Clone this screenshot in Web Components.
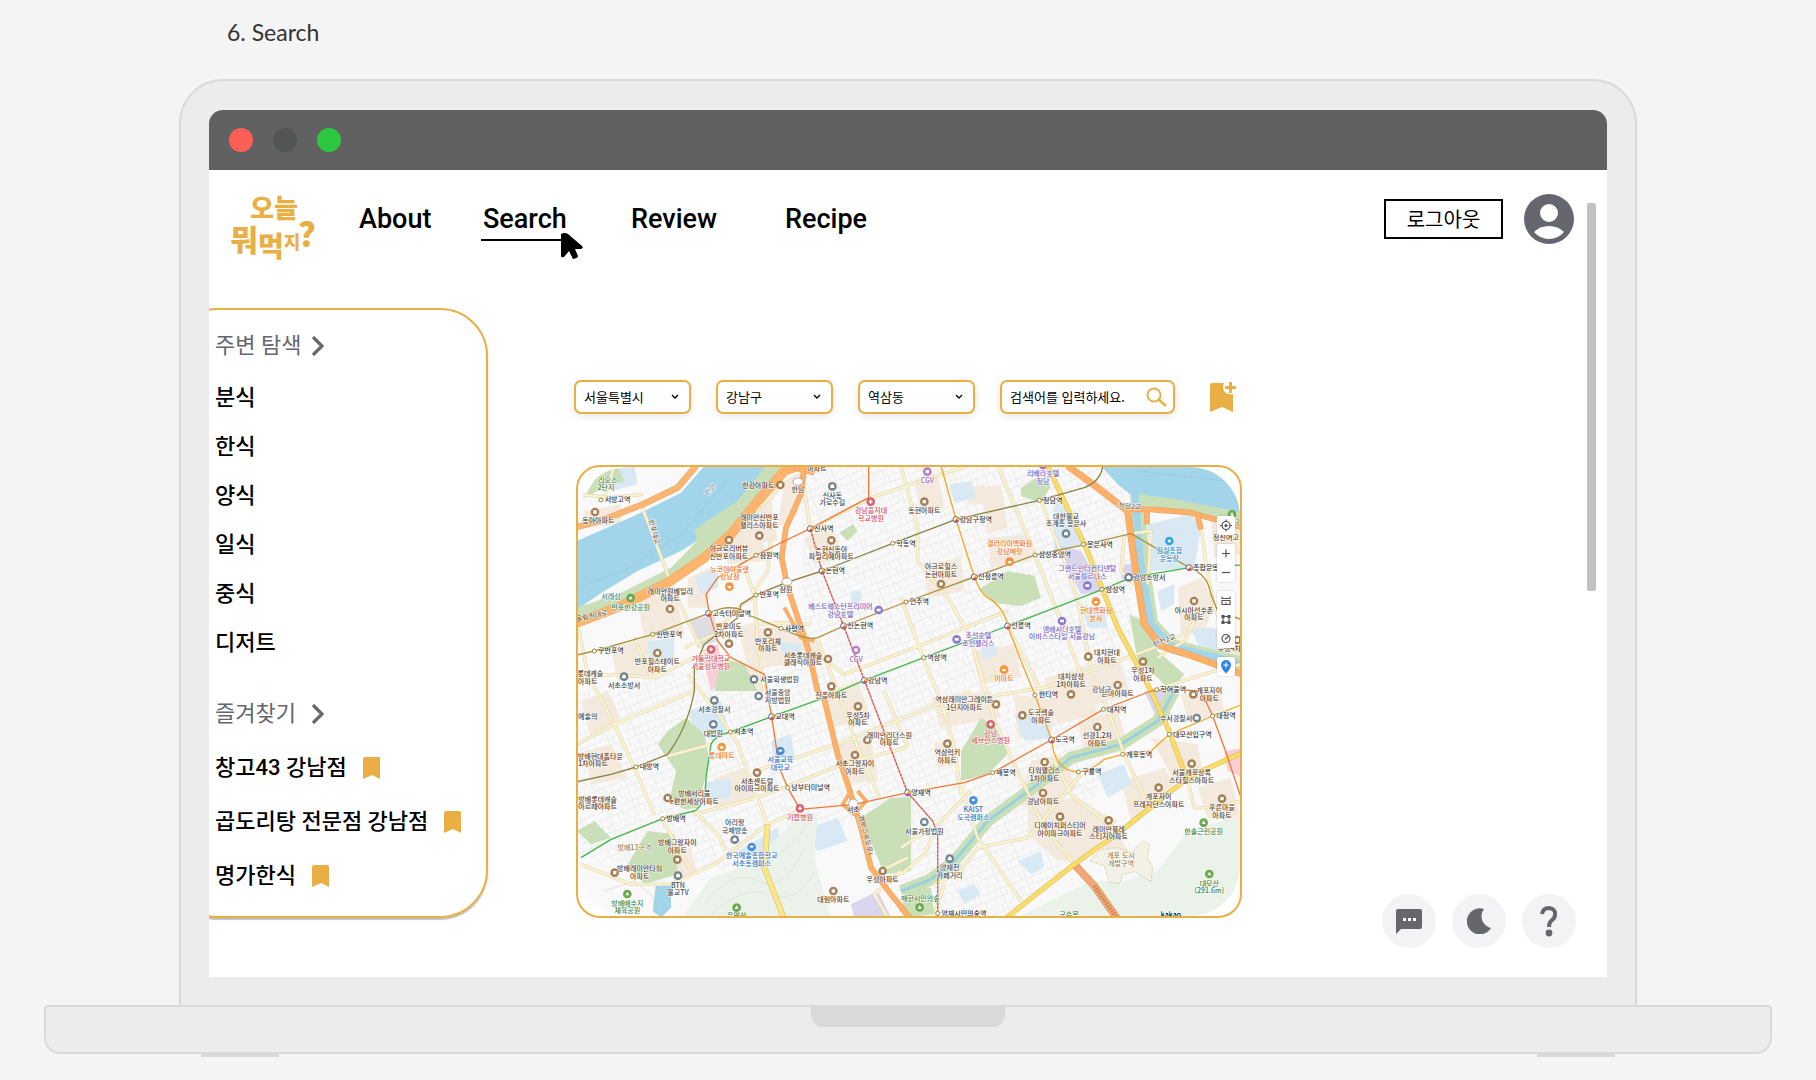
<!DOCTYPE html>
<html lang="ko">
<head>
<meta charset="UTF-8">
<meta name="viewport" content="width=device-width, initial-scale=1">
<title>6. Search</title>
<style>
  :root {
    --accent: #e9af44;
    --ink: #000;
    --muted: #66666e;
    --kr: Roboto, 'Noto Sans CJK KR', sans-serif;
  }
  body {
    margin: 0;
    background: #f4f4f4;
    color: var(--ink);
    font-family: var(--kr);
  }
</style>
</head>
<body>

<laptop-frame>
  <span slot="caption">6. Search</span>
  <site-header>
    <nav-link href="#about">About</nav-link>
    <nav-link href="#search" active>Search</nav-link>
    <nav-link href="#review">Review</nav-link>
    <nav-link href="#recipe">Recipe</nav-link>
  </site-header>
  <page-body>
    <side-panel slot="side">
      <menu-section label="주변 탐색" items="분식,한식,양식,일식,중식,디저트"></menu-section>
      <menu-section label="즐겨찾기" items="창고43 강남점,곱도리탕 전문점 강남점,명가한식" saved></menu-section>
    </side-panel>
    <filter-bar>
      <filter-select label="시/도" value="서울특별시"></filter-select>
      <filter-select label="구" value="강남구"></filter-select>
      <filter-select label="동" value="역삼동"></filter-select>
      <search-box placeholder="검색어를 입력하세요."></search-box>
    </filter-bar>
    <district-map></district-map>
  </page-body>
  <quick-actions></quick-actions>
</laptop-frame>

<script>
/* ---------- Laptop ---------- */
class LaptopFrame extends HTMLElement {
  constructor() {
    super();
    this.attachShadow({ mode: 'open' }).innerHTML = `
      <style>
        :host { display: block; }
        .caption {
          padding: 17px 227px 0;
          height: 62px;
          box-sizing: border-box;
          font: 23px/30px Lato, sans-serif;
          color: #333;
          margin-bottom: 17px;
        }
        .lid {
          margin: 0 179px;
          padding: 29px 28px 28px;
          border: 2px solid #dadada;
          border-bottom: none;
          border-radius: 44px 44px 0 0;
          background: #ececec;
        }
        .screen {
          position: relative;
          overflow: hidden;
          border-radius: 14px 14px 0 0;
          background: #fff;
        }
        .bar {
          display: flex;
          align-items: center;
          gap: 20px;
          height: 60px;
          padding: 0 20px;
          background: #616161;
        }
        .bar i { width: 24px; height: 24px; border-radius: 50%; }
        .close { background: #ff5f57; }
        .min { background: #545655; }
        .max { background: #2dc840; }
        .scroll {
          position: absolute;
          top: 93px;
          right: 11px;
          width: 9px;
          height: 388px;
          border-radius: 2px;
          background: #c2c2c2;
        }
        .base {
          display: flex;
          justify-content: center;
          height: 45px;
          margin: 0 44px;
          border: 2px solid #dadada;
          border-radius: 4px 4px 16px 16px;
          background: #ececec;
        }
        .notch {
          width: 194px;
          height: 20px;
          border-radius: 0 0 12px 12px;
          background: #d9d9d9;
        }
        .feet {
          display: flex;
          justify-content: space-between;
          margin: 0 201px;
        }
        .feet i { width: 78px; height: 3px; background: #d9d9d9; }
      </style>
      <div class="caption"><slot name="caption"></slot></div>
      <div class="lid">
        <div class="screen">
          <div class="bar"><i class="close"></i><i class="min"></i><i class="max"></i></div>
          <slot></slot>
          <div class="scroll"></div>
        </div>
      </div>
      <div class="base"><div class="notch"></div></div>
      <div class="feet"><i></i><i></i></div>
    `;
  }
}

/* ---------- Header ---------- */
class SiteHeader extends HTMLElement {
  constructor() {
    super();
    this.attachShadow({ mode: 'open' }).innerHTML = `
      <style>
        :host {
          display: flex;
          align-items: center;
          height: 98px;
          padding: 0 33px 0 22px;
        }
        .logo { display: block; width: 84px; height: 86px; }
        .logo svg { display: block; overflow: visible; }
        .logo text {
          fill: var(--accent);
          font-family: 'Noto Sans CJK KR', sans-serif;
          font-weight: 900;
          text-anchor: middle;
        }
        nav {
          flex: 1;
          display: grid;
          grid-template-columns: 124px 148px 154px auto;
          justify-items: start;
          margin-left: 42px;
        }
        .logout {
          width: 119px;
          height: 40px;
          padding: 0;
          border: 2px solid #000;
          background: #fff;
          color: #000;
          font: 20px/28px 'Noto Sans CJK KR', sans-serif;
        }
        .avatar {
          margin-left: 21px;
          padding: 0;
          border: none;
          background: none;
        }
        .avatar svg { display: block; width: 50px; height: 50px; }
      </style>
      <a class="logo" href="#home" aria-label="오늘 뭐먹지?">
        <svg width="84" height="86" viewBox="0 0 84 86">
          <text x="43" y="42" font-size="26">오늘</text>
          <text x="13" y="75" font-size="30">뭐</text>
          <text x="40" y="81" font-size="28">먹</text>
          <text x="61" y="73" font-size="18">지</text>
          <text x="76" y="71" font-size="34">?</text>
        </svg>
      </a>
      <nav><slot></slot></nav>
      <button class="logout">로그아웃</button>
      <button class="avatar" aria-label="내 정보">
        <svg viewBox="0 0 50 50">
          <circle cx="25" cy="25" r="25" fill="#66666e"/>
          <circle cx="25" cy="19" r="9" fill="#fff"/>
          <path d="M10 38Q16 32 25 32T40 38Q34 45 25 45T10 38z" fill="#fff"/>
        </svg>
      </button>
    `;
  }
}

class NavLink extends HTMLElement {
  connectedCallback() {
    const active = this.hasAttribute('active');
    this.attachShadow({ mode: 'open' }).innerHTML = `
      <style>
        :host { display: block; position: relative; }
        a {
          display: block;
          padding: 4px 2px;
          border: solid transparent;
          border-width: 2px 0;
          color: #000;
          font: 500 27px/32px Roboto, sans-serif;
          text-decoration: none;
        }
        a.active { border-bottom-color: #000; }
        .cursor { position: absolute; right: -14px; bottom: -18px; width: 22px; height: 26px; }
      </style>
      <a class="${active ? 'active' : ''}" href="${this.getAttribute('href')}"><slot></slot></a>
      ${active ? '<svg class="cursor" viewBox="0 0 22 26"><path d="M0 1Q4-1 7 1L21 13Q23 15 20 16L14 16L17 23Q17 25 12 26L8 18L3 24Q0 25 0 23z"/></svg>' : ''}
    `;
  }
}

/* ---------- Page columns ---------- */
class PageBody extends HTMLElement {
  constructor() {
    super();
    this.attachShadow({ mode: 'open' }).innerHTML = `
      <style>
        :host { display: flex; align-items: flex-start; padding: 40px 0 59px; }
        main { flex: 0 1 668px; min-width: 0; margin-left: 86px; padding-top: 72px; }
      </style>
      <slot name="side"></slot>
      <main><slot></slot></main>
    `;
  }
}

class SidePanel extends HTMLElement {
  constructor() {
    super();
    this.attachShadow({ mode: 'open' }).innerHTML = `
      <style>
        :host {
          display: flex;
          flex-direction: column;
          gap: 31px;
          flex: none;
          box-sizing: border-box;
          width: 319px;
          margin-left: -40px;
          padding: 20px 0 13px 44px;
          border: 2px solid var(--accent);
          border-radius: 48px;
          box-shadow: 0 2px 1px rgba(0, 0, 0, 0.25);
        }
      </style>
      <slot></slot>
    `;
  }
}

class MenuSection extends HTMLElement {
  connectedCallback() {
    const saved = this.hasAttribute('saved');
    const mark  = '<svg width="17" height="22" viewBox="0 0 17 22"><path d="M0 2Q0 0 2 0H15Q17 0 17 2V22L9 18L0 22z" fill="#e9af44"/></svg>';
    const items = this.getAttribute('items').split(',');

    this.attachShadow({ mode: 'open' }).innerHTML = `
      <style>
        :host { display: block; font-size: 22px; line-height: 32px; }
        h2 {
          display: flex;
          align-items: center;
          margin: 0 0 11px;
          color: var(--muted);
          font: inherit;
        }
        h2 span { min-width: 96px; }
        ul { margin: 0; padding: 0; list-style: none; }
        li { display: flex; align-items: center; height: ${saved ? 54 : 49}px; }
        a {
          display: flex;
          align-items: center;
          gap: 16px;
          color: #000;
          font-weight: 500;
          text-decoration: none;
        }
      </style>
      <h2>
        <span>${this.getAttribute('label')}</span>
        <svg width="14" height="20" viewBox="0 0 14 20"><path d="M2 1L11 10L2 19" fill="none" stroke="#66666e" stroke-width="3.200"/></svg>
      </h2>
      <ul>${items.map(t => `<li><a href="#">${t}${saved ? mark : ''}</a></li>`).join('')}</ul>
    `;
  }
}

/* ---------- Filters ---------- */
class FilterBar extends HTMLElement {
  constructor() {
    super();
    this.attachShadow({ mode: 'open' }).innerHTML = `
      <style>
        :host { display: flex; align-items: center; gap: 25px; margin-bottom: 51px; }
        button { padding: 0 0 0 10px; border: none; background: none; }
        svg { display: block; }
      </style>
      <slot></slot>
      <button aria-label="즐겨찾기 추가">
        <svg width="26" height="30" viewBox="0 0 26 30" fill="#e9af44">
          <path d="M2 1H14Q12 5 14 9Q17 13 23 12V30L12 25L0 30V3Q0 1 2 1z"/>
          <path d="M19 0H22V4H26V7H22V11H19V7H15V4H19z"/>
        </svg>
      </button>
    `;
  }
}

const FIELD_CSS = `
  :host { display: block; min-width: 0; }
  .field {
    display: flex;
    align-items: center;
    box-sizing: border-box;
    height: 34px;
    padding: 0 8px;
    border: 2px solid var(--accent);
    border-radius: 7px;
    background: #fff;
    box-shadow: 0 2px 8px rgba(0, 0, 0, 0.1);
  }
  select, input {
    flex: 1;
    min-width: 0;
    padding: 0;
    border: none;
    outline: none;
    appearance: none;
    background: none;
    color: #000;
    font: 13px/20px 'Noto Sans CJK KR', sans-serif;
  }
  svg { flex: none; }
`;

class FilterSelect extends HTMLElement {
  connectedCallback() {
    this.attachShadow({ mode: 'open' }).innerHTML = `
      <style>${FIELD_CSS} :host { flex: 0 1 117px; }</style>
      <div class="field">
        <select aria-label="${this.getAttribute('label')}"><option>${this.getAttribute('value')}</option></select>
        <svg width="12" height="8" viewBox="0 0 12 8"><path d="M3 2L6 5L9 2" fill="none" stroke="#000" stroke-width="1.4"/></svg>
      </div>
    `;
  }
}

class SearchBox extends HTMLElement {
  connectedCallback() {
    this.attachShadow({ mode: 'open' }).innerHTML = `
      <style>
        ${FIELD_CSS}
        :host { flex: 0 1 175px; }
        .field { padding-right: 6px; }
        input::placeholder { color: #000; opacity: 1; }
      </style>
      <label class="field">
        <input type="text" aria-label="검색어" placeholder="${this.getAttribute('placeholder')}">
        <svg width="21" height="20" viewBox="0 0 21 20" fill="none" stroke="#e9af44" stroke-width="2">
          <circle cx="8" cy="8" r="6.5"/><path d="M12 12L20 19" stroke-width="2.6"/>
        </svg>
      </label>
    `;
  }
}

/* ---------- Map ---------- */
const WATER = [
  'M18 240L120 195L210 155L330 95L400 15H610L540 90L440 200L330 270L200 330L100 390L18 445z',
  'M1590 15H2015V160L1850 125L1690 110L1640 70z',
  'M255 1270L300 1270L300 1340L270 1370L245 1350z'
];

const GREEN = [
  'M585 15L500 120L370 205L378 240L300 320L150 395L18 440V478L200 410L330 345L450 265L540 160L650 25V15z',
  'M1690 98L1800 112L2010 155V185L1860 160L1700 130z',
  'M1225 385L1310 330L1390 345L1410 410L1350 435L1270 425z',
  'M1350 80L1400 48L1440 75L1410 125L1350 105z',
  'M805 215L845 190L860 210L830 240z',
  'M290 810L345 770L400 820L415 900L380 1040L340 1045L295 1020L315 930L260 850z',
  'M230 1110L310 1120L320 1240L220 1270L170 1210z',
  'M450 590L520 610L560 690H430z',
  'M1170 870L1230 770L1290 810L1310 880L1250 940L1170 960z',
  'M1675 460L1720 480L1760 570L1840 640L1800 690L1760 650L1700 600z',
  'M870 1070L960 1010H1020V1230L940 1240z',
  'M990 1270L1080 1280L1090 1360L1000 1370z',
  'M85 30L140 15L160 60L80 90L40 110z',
  'M1820 570L2010 620V600L1850 550z',
  'M18 1110L70 1080L120 1130L60 1150z'
];

const HILLS = [
  'M330 1375L420 1250L540 1210L690 1060L740 1055L730 1190L780 1375z',
  'M1330 1375L1480 1300L1560 1260L1660 1260L1760 1230L1850 1110L2015 1060V1375z'
];

const BLOCKS = [
  'M40 150L150 130L150 190L40 200z', 'M500 150L600 110L620 240L520 250z', 'M350 350L420 320L410 440L350 440z',
  'M200 420L310 380L340 520L220 540z', 'M120 560L230 530L260 640L140 660z', 'M460 220L560 180L590 300L470 310z',
  'M560 500L680 500L720 600L580 620z', 'M500 500L560 480L570 600L540 650z', 'M640 60L690 30L680 160L620 200z',
  'M700 230L780 190L820 290L730 310z', 'M30 720L110 690L150 770L60 830z', 'M40 870L120 850L170 950L60 970z',
  'M430 950L520 920L560 1010L430 1040z', 'M740 700L860 660L900 770L790 800z', 'M800 850L900 830L920 960L830 970z',
  'M300 1170L360 1160L380 1240L310 1260z', 'M1030 60L1100 40L1120 140L1050 160z', 'M1060 310L1170 290L1180 390L1070 410z',
  'M1190 80L1240 70L1240 130L1190 130z', 'M1230 80L1290 70L1310 200L1250 220z', 'M1250 230L1370 220L1380 300L1260 320z',
  'M1820 380L1890 350L1930 420L1900 520L1830 520z', 'M1200 570L1330 550L1350 650L1230 670z', 'M1520 620L1640 590L1680 700L1540 740z',
  'M1420 650L1540 620L1580 760L1460 790z', 'M1080 710L1260 690L1290 770L1110 800z', 'M1330 700L1460 720L1440 830L1340 830z',
  'M1520 780L1640 750L1670 850L1540 880z', 'M1380 900L1470 880L1520 980L1420 1050L1340 1030z', 'M1370 1040L1510 1010L1640 1080L1550 1190L1460 1200L1370 1120z',
  'M1650 960L1780 920L1810 970L1680 1080z', 'M1740 830L1880 850L1900 960L1810 960z', 'M1880 980L1980 950L2010 1080L1910 1070z',
  'M1920 180L2010 190V280L1930 290z', 'M1090 850L1150 830L1160 910L1100 920z', 'M1600 1150L1640 1110L1670 1170L1620 1210z',
  'M1830 700L1950 690L1960 760L1850 780z', 'M500 610L560 600L580 690L520 690z', 'M700 550L750 540L770 600L720 610z'
];

const PALE = [
  'M1730 190L1860 160L1890 200L1870 320L1740 330z', 'M1450 120L1500 150L1530 250L1450 270z', 'M1135 70L1200 60L1215 110L1150 125z',
  'M350 750L450 720L470 800L430 840L380 820z', 'M400 965L480 950L480 1010L400 1020z', 'M600 840L660 820L670 890L610 900z',
  'M500 1170L620 1100L630 1140L590 1200L520 1190z', 'M690 1110L800 1070L830 1140L740 1170z', 'M370 350L440 320L440 380L390 400z',
  'M230 540L310 530L310 590L240 620z', 'M620 540L690 550L690 610L650 600z', 'M1330 760L1430 770L1440 830L1360 840z',
  'M1580 940L1660 910L1680 970L1610 1010z', 'M1340 1200L1410 1170L1420 1220L1380 1240z', 'M1530 430L1600 450L1610 500L1550 500z',
  'M1760 390L1810 370L1810 430L1770 450z', 'M1860 500L1930 500L2010 560V600L1880 550z', 'M1160 1290L1210 1270L1230 1300L1180 1330z',
  'M840 390L870 390L870 420L840 430z', 'M1230 560L1270 550L1280 580L1240 600z', 'M100 30L190 15L200 70L120 90z', 'M940 1020L1020 1000L1020 1060z'
];

const STREETS = [
  'M18 100L120 110L215 100', 'M130 15L100 110', 'M210 130L290 340L350 480L390 560', 'M18 480L50 640L130 790L190 920L250 1060',
  'M18 650L130 640L250 650L430 560', 'M190 530L240 650', 'M350 640L450 770L500 850L540 960L590 1090', 'M18 850L130 790L250 740L370 690',
  'M270 1070L360 1230', 'M370 1050L440 1120L465 1170', 'M30 1210L180 1270L300 1270L430 1210L590 1090L680 1050', 'M370 1060L560 1010L640 980L840 900L1010 860',
  'M420 850L290 885', 'M550 930L800 850L1000 770L1200 690', 'M540 160L600 110L640 60', 'M520 320L550 400L560 540L580 690', 'M600 230L590 330L550 390',
  'M340 560L430 520L500 440L560 400', 'M560 490L630 485L720 490', 'M690 15L718 203', 'M718 203L900 110L1050 60L1190 15', 'M990 15L1040 200L1040 300L1130 410L1200 530L1240 690',
  'M740 540L800 690L860 860L925 1010', 'M740 580L820 640L1005 570L1310 450', 'M990 410L1060 600L1110 720L1150 860L1170 1000', 'M1280 15L1380 250L1450 430L1530 640',
  'M1410 120L1480 300L1520 420L1560 620', 'M1100 760L1290 700L1420 680L1560 630L1750 560L1840 520', 'M1310 495L1410 690', 'M1220 600L1270 780L1340 930L1420 1100L1510 1210',
  'M1170 980L1220 1130L1350 1320', 'M1200 990L1100 1090L1060 1180L990 1240', 'M1090 1270L1160 1240L1220 1160L1370 1130L1420 1070L1530 940', 'M1450 900L1500 1000L1640 1110',
  'M1600 720L1660 880L1720 1010', 'M1760 590L1840 540L1880 460', 'M1680 218L1740 210L1730 370', 'M1660 220L1650 330L1690 370', 'M1890 200L1910 340L1930 440L1990 580',
  'M1740 690L1930 630L2010 610', 'M990 1160L1080 1100', 'M940 690L1010 860', 'M1120 1270L1090 1360', 'M890 1250L1010 1190', 'M950 1370L910 1300L990 1230', 'M1850 960L1870 1040L1930 1040L2010 1020'
];

// [path, casing, fill, width]
const HIGHWAYS = [
  ['M18 198L100 175L215 130L320 80L375 15', '#e9a45c', '#fcb673', 16],
  ['M18 485L150 435L290 365L400 290L480 220L560 120L640 30L680 15', '#f0a860', '#fdb56e', 26],
  ['M650 15L730 35M700 15L690 100L645 200L632 290L650 380L690 500L710 560L740 690L760 715L800 880L840 1000L870 1100L900 1220L960 1300L1020 1375', '#e9a45c', '#fcb06a', 14],
  ['M640 440L690 530L730 540', '#e9a45c', '#fcb06a', 8],
  ['M840 990L815 1030L850 1060L885 1020L860 990', '#e9a45c', '#fcb06a', 8],
  ['M1490 15L1580 80L1670 150L1690 300L1720 490L1770 555L1850 580L2015 640', '#e9a45c', '#fcb06a', 18],
  ['M1670 145L1740 145L1860 155L1930 175L2015 200M1728 145V190M1880 165L1890 205', '#e9a45c', '#fcb06a', 14],
  ['M1510 1210L1570 1275L1640 1375', '#d9925a', '#f0a878', 20],
  ['M1430 15L1545 260L1640 500L1740 690L1790 800L1850 960', '#dcb840', '#f9dc6c', 12],
  ['M1300 1375L1510 1210L1650 1110L1800 990L1870 940L2015 875', '#dcb840', '#f9dc6c', 12],
  ['M590 1090L580 1220L640 1375', '#d8bc58', '#fbe68a', 14],
  ['M990 1340L1020 1375', '#e9a45c', '#fcb06a', 14]
];

// [path, colour]
const LINES = [
  ['M893 15V110L718 203L640 240L555 283L440 350L405 400L415 457L440 540L480 590L580 640L595 730L602 767L625 920L650 980L687 1045L850 1030L1010 995L1180 965L1265 935L1440 837L1597 745L1740 690L1800 685L1890 690L1925 765L1960 860L2010 1010', '#ef7a35'],
  ['M718 203L753 330L818 495L880 658L950 840L1010 995L1085 1080L1100 1120V1370', '#d4504c'],
  ['M18 582L70 570L245 520L413 457Q490 420 540 465L630 502Q710 540 740 530L818 495L1005 423L1210 348L1392 282L1545 250L1680 218L1855 320Q1910 340 1920 400L1940 450L2010 475', '#b0923c'],
  ['M18 962L120 940L195 918L290 880Q350 800 370 690V620L400 550L500 470L510 430L555 402L645 365L753 330L965 247L1155 175L1405 118L1540 80Q1590 60 1595 15', '#8c8340'],
  ['M30 1190L120 1135L275 1073L370 1050Q405 1030 405 950L420 850Q430 825 478 813L602 767L760 710L880 658L1058 590L1310 495L1595 385L1680 350L1855 320L2010 312', '#45b549'],
  ['M1110 15L1155 175L1210 348Q1230 400 1250 410Q1300 440 1310 495L1350 600L1392 702L1442 837Q1450 930 1522 933Q1560 930 1600 895L1655 880L1740 870L1795 820L1925 765L2010 732', '#f2a826']
];

// Interchange stations get the multi-colour dot
const STATIONS = [
  ['신사역', 718, 203, 1], ['논현역', 753, 330, 1], ['신논현역', 818, 495, 1], ['강남역', 880, 658, 1], ['고속터미널역', 413, 457, 1],
  ['잠원역', 555, 283], ['반포역', 555, 402], ['사평역', 630, 502], ['신반포역', 245, 520], ['구반포역', 70, 570], ['학동역', 965, 247],
  ['언주역', 1005, 423], ['강남구청역', 1155, 175, 1], ['청담역', 1405, 118], ['선정릉역', 1210, 348, 1], ['삼성중앙역', 1392, 282],
  ['봉은사역', 1537, 250], ['종합운동장역', 1855, 320, 1], ['삼성역', 1593, 385], ['선릉역', 1310, 495, 1], ['역삼역', 1058, 590],
  ['교대역', 602, 767, 1], ['서초역', 478, 813], ['남부터미널역', 650, 980], ['내방역', 195, 918], ['방배역', 275, 1073], ['양재역', 1010, 995, 1],
  ['매봉역', 1265, 935], ['도곡역', 1442, 837, 1], ['한티역', 1392, 702], ['대치역', 1597, 745], ['구룡역', 1522, 933], ['개포동역', 1655, 880],
  ['대모산입구역', 1795, 820], ['대청역', 1925, 765], ['양재시민의숲역', 1100, 1357], ['학여울역', 1757, 686], ['서방고역', 90, 117]
];

const KINDS = {
  apt:    ['#a58056', '#5a3a22', 'M-5-5H5V5H-5z'],
  shop:   ['#f5953b', '#ee7420', 'M-6-2H6L4 5H-4z'],
  med:    ['#d8636f', '#d04f63', 'M-2-6H2V-2H6V2H2V6H-2V2H-6V-2H-2z'],
  hotel:  ['#8d77d3', '#7361c4', 'M-6-4H6V4H-6z'],
  cine:   ['#b47fc8', '#a264bb', 'M-5-5H5V5H-5z'],
  school: ['#4b8fd6', '#2f6fbe', 'M-7-1L0-5L7-1L0 3z'],
  park:   ['#6aa84f', '#3f8140', 'M0-7L6 4H-6z'],
  gov:    ['#72828f', '#3d4b57', 'M-6-3L0-7L6-3V5H-6z'],
  sport:  ['#35a3e0', '#1d87cc', 'M-6 0L0-5L6 0L0 5z']
};

// [kind, pin x, pin y, text x, first line y, text]
const PLACES = [
  ['apt', 628, 72, 562, 80, '한강아파트'], ['apt', 72, 153, 82, 187, '동아아파트'], ['gov', 784, 76, 784, 110, '신사동|가로수길'],
  ['med', 899, 122, 900, 156, '강남을지대|학교병원'], ['apt', 565, 224, 565, 178, '래미안신반포|팰리스아파트'], ['apt', 474, 237, 474, 270, '아크로리버뷰|신반포아파트'],
  ['apt', 781, 238, 781, 272, '논현신동아|파밀리에아파트'], ['shop', 475, 377, 476, 332, '뉴코아아울렛|강남점'], ['apt', 297, 444, 298, 398, '래미안원베일리|아파트'],
  ['park', 179, 411, 179, 446, '반포한강공원'], ['hotel', 923, 447, 808, 444, '베스트웨스턴프리미어|강남호텔'], ['apt', 474, 548, 474, 504, '반포미도|2차아파트'],
  ['apt', 591, 514, 591, 548, '반포리체|아파트'], ['apt', 771, 594, 696, 590, '서초롯데캐슬|클래식아파트'], ['cine', 855, 567, 855, 602, 'CGV'],
  ['med', 420, 565, 420, 600, '가톨릭대학교|서울성모병원'], ['apt', 259, 576, 259, 610, '반포힐스테이트|아파트'], ['gov', 159, 647, 159, 682, '서초소방서'],
  ['gov', 549, 655, 626, 663, '서울회생법원'], ['apt', 781, 676, 781, 711, '진흥아파트'], ['gov', 563, 705, 620, 702, '서울중앙|지방법원'],
  ['cine', 1069, 32, 1069, 67, 'CGV'], ['apt', 1060, 122, 1060, 157, '동현아파트'], ['hotel', 1416, 12, 1416, 45, '리베라호텔|청담'],
  ['gov', 1485, 218, 1485, 173, '대한불교|조계종 봉은사'], ['shop', 1316, 302, 1316, 256, '갤러리아백화점|강남매장'], ['apt', 1110, 369, 1110, 325, '아크로힐스|논현아파트'],
  ['hotel', 1549, 374, 1549, 330, '그랜드인터컨티넨탈|서울파르나스'], ['sport', 1795, 240, 1795, 276, '잠실종합|운동장'], ['park', 1983, 160, 1975, 192, '잠실한강'],
  ['gov', 1673, 349, 1735, 356, '강남소방서'], ['shop', 1575, 422, 1575, 456, '현대백화점|본사'], ['apt', 1869, 420, 1869, 455, '아시아선수촌|아파트'],
  ['hotel', 1473, 480, 1473, 512, '앰배서더호텔|이비스스타일 서울강남'], ['hotel', 1157, 535, 1222, 532, '조선호텔|조선팰리스'], ['shop', 1299, 626, 1299, 660, '이마트'],
  ['apt', 1552, 587, 1608, 582, '대치현대|아파트'], ['apt', 1716, 602, 1716, 636, '우성1차|아파트'], ['apt', 1640, 672, 1500, 655, '대치삼성|1차아파트'],
  ['apt', 1999, 537, 1975, 570, '우성4차'], ['gov', 430, 718, 430, 752, '서초경찰서'], ['gov', 427, 790, 427, 824, '대법원'],
  ['shop', 452, 858, 452, 892, '롯데마트'], ['apt', 861, 736, 861, 770, '우성5차|아파트'], ['apt', 889, 837, 955, 830, '래미안리더스원|아파트'],
  ['school', 628, 870, 628, 904, '서울교육|대학교'], ['apt', 852, 882, 852, 916, '서초그랑자이|아파트'], ['apt', 558, 935, 558, 968, '서초센트럴|아이파크아파트'],
  ['apt', 290, 1011, 370, 1006, '방배서리풀|e편한세상아파트'], ['med', 687, 1042, 687, 1076, '기쁨병원'], ['gov', 491, 1136, 491, 1092, '아리랑|국제방송'],
  ['school', 542, 1158, 542, 1192, '한국예술종합학교|서초동캠퍼스'], ['apt', 319, 1196, 319, 1152, '방배그랑자이|아파트'], ['apt', 131, 1235, 206, 1230, '방배래미안타워|아파트'],
  ['gov', 321, 1244, 321, 1280, 'BTN|불교TV'], ['park', 169, 1299, 169, 1334, '방배배수지|체육공원'], ['park', 497, 1340, 497, 1370, '우면산'],
  ['apt', 935, 1230, 935, 1264, '우성아파트'], ['apt', 787, 1290, 787, 1324, '대림아파트'], ['apt', 1275, 730, 1180, 724, '역삼래미안그레이튼|1단지아파트'],
  ['med', 1259, 790, 1259, 824, '강남|세브란스병원'], ['apt', 1354, 763, 1410, 762, '도곡렉슬|아파트'], ['apt', 1129, 848, 1129, 882, '역삼럭키|아파트'],
  ['apt', 1579, 798, 1579, 832, '선경1,2차|아파트'], ['apt', 1421, 903, 1421, 937, '타워팰리스|1차아파트'], ['apt', 1416, 996, 1416, 1030, '경남아파트'],
  ['school', 1207, 1018, 1207, 1053, 'KAIST|도곡캠퍼스'], ['gov', 1060, 1083, 1060, 1118, '서울가정법원'], ['gov', 1136, 1193, 1136, 1228, '양재천|카페거리'],
  ['apt', 1467, 1067, 1467, 1101, '디에이치퍼스티어|아이파크아파트'], ['apt', 1613, 1078, 1613, 1112, '래미안블레|스티지아파트'], ['apt', 1763, 980, 1763, 1014, '개포자이|프레지던스아파트'],
  ['apt', 1862, 908, 1862, 942, '서울개포상록|스타힐스아파트'], ['apt', 1953, 1013, 1953, 1047, '푸른마을|아파트'], ['park', 1898, 1085, 1898, 1120, '한솔근린공원'],
  ['gov', 1877, 771, 1815, 779, '수서경찰서'], ['apt', 1867, 700, 1915, 696, '개포자이|아파트'], ['park', 1915, 1239, 1915, 1274, '대모산|(291.6m)'],
  ['park', 1046, 1339, 1048, 1320, '매헌시민의숲'], ['apt', 1500, 700, 1640, 706, '은마아파트']
];

// Loose captions: [colour, x, y, text, angle]
const CAPTIONS = [
  ['#6f8fb0', 423, 90, '한강', -50], ['#7a6a50', 243, 215, '반포대교', 75], ['#7a5a30', 64, 472, '올림픽대로', -12],
  ['#3d8b8b', 120, 413, '서래섬', 0], ['#3f8140', 110, 65, '리오스', 0], ['#3f8140', 105, 88, '2단지', 0],
  ['#7a6a50', 1676, 143, '청담2교', 5], ['#7a6a50', 1783, 545, '탄천2교', -22], ['#a08050', 190, 1168, '방배13구역', 0],
  ['#a08050', 1650, 1192, '개포 도시', 0], ['#a08050', 1650, 1214, '개발구역', 0], ['#5a3a22', 88, 894, '방배현대홈타운', 0],
  ['#5a3a22', 66, 916, '1차아파트', 0], ['#5a3a22', 80, 1022, '방배롯데캐슬', 0], ['#5a3a22', 80, 1044, '아르떼아파트', 0],
  ['#5a3a22', 58, 644, '롯데캐슬', 0], ['#5a3a22', 50, 668, '아파트', 0], ['#3d4b57', 50, 775, '예술의', 0],
  ['#7a5a30', 876, 1120, '경부고속도로', 75], ['#4a4a4a', 645, 392, '잠원', 0], ['#4a4a4a', 681, 92, '한남', 0],
  ['#4a4a4a', 847, 1054, '서초', 0], ['#3f8140', 1494, 1368, '국수봉', 0], ['#5a3a22', 738, 30, '아파트', 0],
  ['#555', 1592, 692, '강남구', 0], ['#5a3a22', 1965, 236, '정신여고', 0], ['#000', 1800, 1368, 'kakao', 0]
];

class DistrictMap extends HTMLElement {
  constructor() {
    super();
    this.attachShadow({ mode: 'open' });
  }

  connectedCallback() { this._render(); }

  _fill(list, colour) {
    return `<path d="${list.join('')}" fill="${colour}"/>`;
  }

  _highway([d, casing, fill, w]) {
    return `<path d="${d}" stroke="${casing}" stroke-width="${w + 3}"/><path d="${d}" stroke="${fill}" stroke-width="${w}"/>`;
  }

  _station([name, x, y, hub]) {
    const dot = hub
      ? `<circle cx="${x}" cy="${y}" r="9" fill="#fff" stroke="#4a63b5" stroke-width="3"/><path d="M${x} ${y}V${y - 9}A9 9 0 0 1 ${x + 8} ${y + 4}z" fill="#f0b93a"/><path d="M${x} ${y}L${x + 8} ${y + 4}A9 9 0 0 1 ${x - 6} ${y + 7}z" fill="#dd4a48"/>`
      : `<circle cx="${x}" cy="${y}" r="6" fill="#fff" stroke="#9a8a3c" stroke-width="3"/>`;
    return `${dot}<text x="${x + 11}" y="${y + 7}" fill="#333" text-anchor="start">${name}</text>`;
  }

  _place([kind, px, py, tx, ty, text]) {
    const [pin, ink, glyph] = KINDS[kind];
    const lines = text.split('|').map((t, i) => `<text x="${tx}" y="${ty + i * 23}" fill="${ink}">${t}</text>`).join('');
    return `<circle cx="${px}" cy="${py}" r="13" fill="${pin}"/><path d="${glyph}" transform="translate(${px} ${py})" fill="#fff"/>${lines}`;
  }

  _render() {
    this.shadowRoot.innerHTML = `
      <style>
        :host {
          display: block;
          position: relative;
          margin-left: 2px;
          border: 2px solid var(--accent);
          border-radius: 24px;
        }
        .map {
          display: block;
          width: 100%;
          height: auto;
          border-radius: 50px;
        }
        .map text {
          font-family: 'Noto Sans CJK KR', sans-serif;
          font-size: 21px;
          font-weight: 500;
          paint-order: stroke;
          stroke: #fff;
          stroke-width: 3px;
          stroke-linejoin: round;
        }
        .tools {
          position: absolute;
          top: 49px;
          right: 5px;
          display: flex;
          flex-direction: column;
          gap: 9px;
        }
        .group { border-radius: 2px; background: #fff; box-shadow: 0 0 2px rgba(0, 0, 0, 0.25); }
        button { display: block; padding: 0; border: none; background: none; }
        button svg { display: block; width: 18px; height: 19px; fill: none; stroke: #555; stroke-width: 1.2; }
      </style>
      <svg class="map" viewBox="21 18 1986 1347" role="img" aria-label="강남구 지도">
        <defs>
          <pattern id="grid" width="84" height="66" patternUnits="userSpaceOnUse" patternTransform="rotate(-22)">
            <path d="M0 0H84M0 22H84M0 44H84M0 0V66M28 0V22M56 22V44M14 44V66M42 0V66M68 44V66" fill="none" stroke="#e4e4e6" stroke-width="2"/>
          </pattern>
        </defs>
        <path d="M0 0H2030V1400H0z" fill="#f9f9f9"/>
        <path d="M690 15H1680V700L1500 1210L1300 1375H1010L700 560z" fill="url(#grid)"/>
        <path d="M18 690L700 560L860 1070L560 1200L330 1240L18 1180z" fill="url(#grid)"/>
        ${this._fill(BLOCKS, '#f3eadd')}
        ${this._fill(PALE, '#d9e9f4')}
        ${this._fill(['M1450 250L1530 270L1600 390L1530 400z', 'M1720 690L1780 680L1800 760L1760 780z', 'M840 1330L920 1290L960 1370H850z', 'M1660 310L1700 310L1690 370L1650 350z'], '#d9d5ee')}
        ${this._fill(['M350 480L430 460L440 540L380 560z'], '#dedee2')}
        ${this._fill(['M390 570L440 550L460 650L420 690z', 'M1960 870L2015 860V950L1970 930z'], '#f7cfd6')}
        ${this._fill(HILLS, '#ebf2ea')}
        ${this._fill(WATER, '#a3d5ea')}
        ${this._fill(GREEN, '#c9dfb8')}
        <g fill="none" stroke-linejoin="round">
          <path d="M1700 100L1712 300L1740 490L1800 555L2015 610" stroke="#c9dfb8" stroke-width="44"/>
          <path d="M1692 100L1708 300L1740 490L1800 555L2015 610" stroke="#a3d5ea" stroke-width="22"/>
          <path d="M990 1290L1080 1255L1150 1200L1250 1080L1400 970L1500 890L1650 850L1760 780L1810 690" stroke="#c9dfb8" stroke-width="36"/>
          <path d="M990 1290L1080 1255L1150 1200L1250 1080L1400 970L1500 890L1650 850L1760 780L1810 690" stroke="#9bd0dd" stroke-width="9"/>
          <path d="M18 380L180 320L330 220L470 60M1700 30L1960 60L2010 100" stroke="#7fb2d6" stroke-width="2" stroke-dasharray="3 4"/>
          <path d="M400 1330Q480 1220 560 1260T700 1160M420 1360Q520 1270 600 1300T730 1230M560 1230Q640 1180 720 1080" stroke="#d3e2d0" stroke-width="2"/>
          <path d="M1555 1200L1590 1165L1640 1160L1680 1175L1715 1140L1735 1150L1730 1190L1745 1220L1740 1262L1690 1232L1655 1240L1645 1268L1615 1265L1600 1215z" fill="#f3f0e6" stroke="#c9b48a" stroke-width="2" stroke-dasharray="5 4"/>
          <path d="M100 1290L190 1260L240 1300L260 1340" stroke="#c9b48a" stroke-width="2" stroke-dasharray="5 4"/>
          <path d="${STREETS.join('')}" stroke="#ddd3ae" stroke-width="10"/>
          <path d="${STREETS.join('')}" stroke="#fbf2cf" stroke-width="7"/>
          ${HIGHWAYS.map(this._highway).join('')}
          <path d="M1570 1275L1640 1375M876 1070L900 1180" stroke="#c9814a" stroke-width="12" stroke-dasharray="4 5"/>
          ${LINES.map(([d, c]) => `<path d="${d}" stroke="${c}" stroke-width="4"/>`).join('')}
          <path d="${LINES[1][0]}" stroke="#fff" stroke-width="2" stroke-dasharray="4 8"/>
        </g>
        <g fill="#fff" stroke="#888" stroke-width="2">
          <ellipse cx="681" cy="62" rx="15" ry="11"/><ellipse cx="648" cy="362" rx="15" ry="11"/><circle cx="847" cy="1028" r="14"/>
        </g>
        <g text-anchor="middle">
          ${STATIONS.map(this._station).join('')}
          ${PLACES.map(this._place).join('')}
          ${CAPTIONS.map(([c, x, y, t, a]) => `<text x="${x}" y="${y}" fill="${c}" transform="rotate(${a} ${x} ${y})">${t}</text>`).join('')}
        </g>
      </svg>
      <div class="tools">
        <div class="group">
          <button aria-label="내 위치"><svg viewBox="0 0 18 18"><circle cx="9" cy="9" r="4"/><circle cx="9" cy="9" r="1" fill="#555"/><path d="M9 3V5M9 13V15M3 9H5M13 9H15"/></svg></button>
        </div>
        <div class="group">
          <button aria-label="확대"><svg viewBox="0 0 18 18"><path d="M9 5V13M5 9H13"/></svg></button>
          <button aria-label="축소"><svg viewBox="0 0 18 18"><path d="M5 9H13"/></svg></button>
        </div>
        <div class="group">
          <button aria-label="거리 재기"><svg viewBox="0 0 18 18"><path d="M5 5V7H13V5M5 9H13V13H5zM9 11V13"/></svg></button>
          <button aria-label="면적 재기"><svg viewBox="0 0 18 18"><path d="M6 6H12V12H6z"/><path d="M5 5H7V7H5zM11 5H13V7H11zM5 11H7V13H5zM11 11H13V13H11z" fill="#555"/></svg></button>
          <button aria-label="반경 재기"><svg viewBox="0 0 18 18"><circle cx="9" cy="9" r="4"/><path d="M8 10L12 6"/></svg></button>
        </div>
        <div class="group">
          <button aria-label="장소 등록"><svg viewBox="0 0 18 18"><path d="M9 16Q4 11 4 7.500A5 5 0 0 1 14 7.500Q14 11 9 16z" fill="#2c86e8" stroke="none"/><path d="M9 5V10M6.500 7.500H11.500" stroke="#fff"/></svg></button>
        </div>
      </div>
    `;
  }
}

/* ---------- Floating buttons ---------- */
class QuickActions extends HTMLElement {
  constructor() {
    super();
    this.attachShadow({ mode: 'open' }).innerHTML = `
      <style>
        :host {
          position: absolute;
          right: 31px;
          bottom: 29px;
          display: flex;
          gap: 16px;
        }
        button {
          display: grid;
          place-items: center;
          width: 54px;
          height: 54px;
          padding: 0;
          border: none;
          border-radius: 50%;
          background: #f3f3f5;
        }
        svg { fill: #66666e; }
      </style>
      <button aria-label="채팅">
        <svg width="26" height="26" viewBox="0 0 26 26">
          <path d="M2 1H24Q26 1 26 3V19Q26 21 24 21H5L0 26V3Q0 1 2 1z"/>
          <path d="M7 10H10V13H7zM12 10H15V13H12zM17 10H20V13H17z" fill="#fff"/>
        </svg>
      </button>
      <button aria-label="다크 모드">
        <svg width="24" height="26" viewBox="0 0 24 26"><path d="M17 1A12 12 0 0 0 24 20A13 13 0 1 1 17 1z"/></svg>
      </button>
      <button aria-label="도움말">
        <svg width="20" height="32" viewBox="0 0 20 32">
          <path d="M3 9Q4 3 10 3Q17 4 16 10Q16 13 12 16Q10 18 10 22" fill="none" stroke="#66666e" stroke-width="4"/>
          <circle cx="10" cy="28" r="3.400"/>
        </svg>
      </button>
    `;
  }
}

customElements.define('laptop-frame', LaptopFrame);
customElements.define('site-header', SiteHeader);
customElements.define('nav-link', NavLink);
customElements.define('page-body', PageBody);
customElements.define('side-panel', SidePanel);
customElements.define('menu-section', MenuSection);
customElements.define('filter-bar', FilterBar);
customElements.define('filter-select', FilterSelect);
customElements.define('search-box', SearchBox);
customElements.define('district-map', DistrictMap);
customElements.define('quick-actions', QuickActions);
</script>
</body>
</html>
